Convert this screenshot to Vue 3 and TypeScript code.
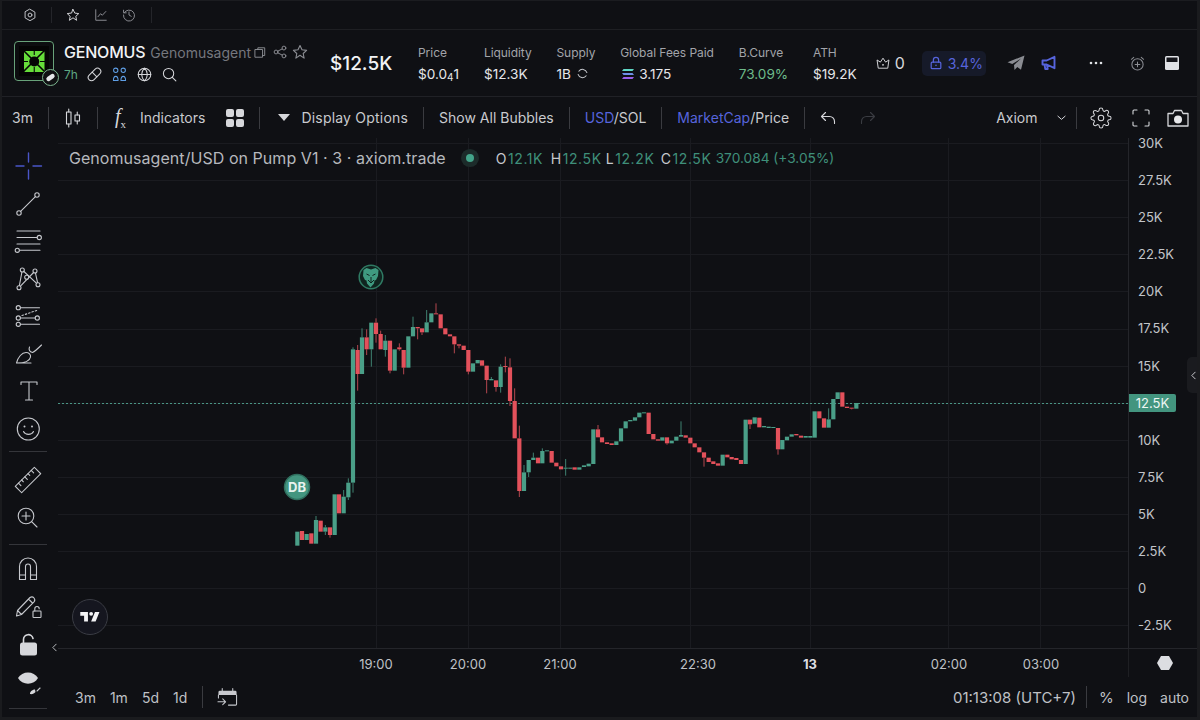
<template>
  <div class="app">
    <div class="top-strip">
      <svg class="ic14 gear-s" viewBox="0 0 16 16"><path class="ln" d="M8 1.5l5.6 3.2v6.6L8 14.5l-5.6-3.2V4.7z" /><circle class="ln" cx="8" cy="8" r="2.2" /></svg>
      <span class="strip-sep"></span>
      <svg class="ic14 star-s" viewBox="0 0 16 16"><path class="ln bright" d="M8 1.6l2 4.2 4.6.6-3.4 3.1.9 4.6L8 11.2l-4.1 2.9.9-4.6L1.4 6.4 6 5.8z" /></svg>
      <svg class="ic14 chart-s" viewBox="0 0 16 16"><path class="ln dim" d="M2 2v12h12M4.5 10l3-3.5 2 1.8L13.5 4" /></svg>
      <svg class="ic14 hist-s" viewBox="0 0 16 16"><path class="ln dim" d="M2.5 5.5A6.3 6.3 0 1 1 1.7 8M1.8 2.5v3h3M8 4.5V8l2.5 1.5" /></svg>
      <span class="strip-sep last"></span>
    </div>

    <header class="token-bar">
      <div class="logo">
        <svg viewBox="0 0 30 30" width="30" height="30">
          <rect width="30" height="30" fill="#050505" />
          <rect x="5" y="5" width="20.500" height="21" rx="1" fill="#66dd3a" />
          <path d="M4 4L26 26M26 4L4 26" stroke="#050505" stroke-width="1.600" />
          <path d="M15.250 4V9M15.250 21V27M4 15.500H9M21 15.500H27" stroke="#050505" stroke-width="1.100" />
          <circle cx="15.250" cy="15.500" r="5" fill="#050505" />
        </svg>
        <span class="pill-badge">
          <svg viewBox="0 0 12 12" width="11" height="11"><rect x="1" y="3.600" width="10" height="4.800" rx="2.400" fill="#e6e8ea" transform="rotate(-35 6 6)" /></svg>
        </span>
      </div>
      <div class="token-id">
        <div class="token-name">
          <b>GENOMUS</b><span class="full-name">Genomusagent</span>
          <svg class="copy" viewBox="0 0 14 14" width="12" height="13"><path class="ln dim" d="M4.500 3.500V1.500h8v9h-2.500M1.500 3.500h8.500v9h-8.500z" /></svg>
          <svg class="ic14 share" viewBox="0 0 16 16"><circle class="ln dim" cx="3.500" cy="8" r="2.200" /><circle class="ln dim" cx="12.500" cy="3.500" r="2.200" /><circle class="ln dim" cx="12.500" cy="12.500" r="2.200" /><path class="ln dim" d="M5.500 7l5-2.500M5.500 9l5 2.500" /></svg>
          <svg class="ic16 tstar" viewBox="0 0 16 16"><path class="ln dim" d="M8 1.600l2 4.200 4.600.6-3.400 3.100.9 4.600L8 11.200l-4.100 2.900.9-4.600L1.400 6.400 6 5.800z" /></svg>
        </div>
        <div class="token-links">
          <span class="age">7h</span>
          <svg class="ic15 l-pill" viewBox="0 0 16 16"><g transform="rotate(-45 8 8)"><rect class="ln bright" x="0" y="4.500" width="16" height="7" rx="3.500" /><path class="ln bright" d="M8 4.500v7" /></g></svg>
          <svg class="ic15 l-group" viewBox="0 0 16 16"><g class="ln blue-l"><circle cx="4" cy="3.500" r="2.300" /><circle cx="12" cy="3.500" r="2.300" /><path d="M1.500 14.500c0-6 5-6 5 0zM9.500 14.500c0-6 5-6 5 0z" /></g></svg>
          <svg class="ic15 l-globe" viewBox="0 0 16 16"><circle class="ln bright" cx="8" cy="8" r="6.700" /><path class="ln bright" d="M1.300 8h13.400M8 1.300c-4 4-4 9.400 0 13.400M8 1.300c4 4 4 9.400 0 13.400" /></svg>
          <svg class="ic15 l-search" viewBox="0 0 16 16"><circle class="ln bright" cx="7" cy="7" r="5.500" /><path class="ln bright" d="M11 11l3.800 3.800" /></svg>
        </div>
      </div>
      <div class="mcap">$12.5K</div>
      <div class="stats">
        <div class="stat" v-for="s in stats" :key="s.label">
          <span class="stat-label">{{ s.label }}</span>
          <span class="stat-value" :class="{ up: s.up }">
            <svg v-if="s.sol" class="sol" viewBox="0 0 12 10" width="12" height="10"><path d="M1.500 0H12l-1.500 2H0z" fill="#5fd6c4" /><path d="M0 4h10.500L12 6H1.500z" fill="#6e8fe6" /><path d="M1.500 8H12l-1.500 2H0z" fill="#9a5fe8" /></svg>
            <template v-if="s.sub">$0.0<span class="sub">4</span>1</template>
            <template v-else>{{ s.value }}</template>
            <svg v-if="s.ring" class="ring" viewBox="0 0 12 12" width="11" height="11"><path class="ln" d="M2 3.500A5 5 0 0 1 10.800 5M10 8.500A5 5 0 0 1 1.200 7" /></svg>
          </span>
        </div>
      </div>
      <div class="holders">
        <svg class="ic14" viewBox="0 0 16 16"><path class="ln bright" d="M2.500 13.500L1.200 4.500 5 7l3-4.500L11 7l3.800-2.500-1.300 9z" /><circle cx="8" cy="10" r="1" fill="#e0e2e6" /></svg>
        <span>0</span>
      </div>
      <div class="lock-pill">
        <svg class="ic14" viewBox="0 0 16 16"><rect class="ln blue-p" x="2.500" y="7" width="11" height="7.500" rx="1.200" /><path class="ln blue-p" d="M5 7V4.500a3 3 0 0 1 6 0V7" /><circle cx="8" cy="10.700" r=".9" fill="#5664dc" /></svg>
        <span>3.4%</span>
      </div>
      <svg class="tg" viewBox="0 0 18 16" width="18" height="16"><path d="M17.500.5L.5 7.300l4.800 1.800L14 3.500 7 10l.5 5 2.800-3 3.700 2.700z" fill="#8a8c92" /></svg>
      <svg class="mega" viewBox="0 0 16 16" width="16" height="16"><path d="M1.500 5.500h4.200L13.500 1.800v11.400L5.700 9.500H1.500zM3.500 9.500l.8 4.500h2.400l-.8-4.200" fill="none" stroke="#5664dc" stroke-width="1.900" stroke-linejoin="round" /></svg>
      <svg class="dots" viewBox="0 0 14 4" width="14" height="4"><circle cx="2" cy="2" r="1.300" fill="#e0e2e6" /><circle cx="7" cy="2" r="1.300" fill="#e0e2e6" /><circle cx="12" cy="2" r="1.300" fill="#e0e2e6" /></svg>
      <svg class="alarm" viewBox="0 0 16 16" width="15" height="15"><circle class="ln dim" cx="8" cy="9" r="6" /><path class="ln dim" d="M8 6.500v5M5.500 9h5M1.500 3.500L4 1.500M14.500 3.500L12 1.500" /></svg>
      <svg class="layout" viewBox="0 0 14 14" width="14" height="14"><rect width="14" height="14" rx="1.500" fill="#e0e2e6" /><rect x="1.500" y="1.500" width="11" height="4.500" fill="#14151a" /></svg>
    </header>

    <nav class="toolbar">
      <span class="tb-item w-interval">3m</span>
      <i class="tb-sep"></i>
      <svg class="candle-ic" viewBox="0 0 16 20" width="16" height="20"><g class="ln bright"><rect x="1.500" y="4" width="4.500" height="12" /><path d="M3.750 1v3M3.750 16v3" /><rect x="10" y="7" width="4.500" height="6" /><path d="M12.250 4v3M12.250 13v3" /></g></svg>
      <i class="tb-sep s2"></i>
      <span class="fx">f<sub>x</sub></span>
      <span class="tb-item indicators">Indicators</span>
      <svg class="grid-ic" viewBox="0 0 18 18" width="18" height="18"><rect width="8" height="8" rx="2" fill="#d6d7db" /><rect x="10" width="8" height="8" rx="2" fill="#d6d7db" /><rect y="10" width="8" height="8" rx="2" fill="#d6d7db" /><rect x="10" y="10" width="8" height="8" rx="2" fill="#d6d7db" /></svg>
      <i class="tb-sep s3"></i>
      <svg class="tri" viewBox="0 0 12 7" width="12" height="7"><path d="M0 0h12L6 7z" fill="#d6d7db" /></svg>
      <span class="tb-item disp">Display Options</span>
      <i class="tb-sep s4"></i>
      <span class="tb-item bubbles">Show All Bubbles</span>
      <i class="tb-sep s4"></i>
      <span class="tb-item"><em>USD</em>/SOL</span>
      <i class="tb-sep s4"></i>
      <span class="tb-item"><em>MarketCap</em>/Price</span>
      <i class="tb-sep s4"></i>
      <svg class="undo" viewBox="0 0 16 14" width="16" height="14"><path class="ln bright" d="M5.500 1.500L1.500 5.500l4 4M1.500 5.500h8a5 5 0 0 1 5 5v2" /></svg>
      <svg class="redo" viewBox="0 0 16 14" width="16" height="14"><path class="ln faint" d="M10.500 1.500l4 4-4 4M14.500 5.500h-8a5 5 0 0 0-5 5v2" /></svg>
      <span class="tb-item axiom">Axiom</span>
      <svg class="chev" viewBox="0 0 10 6" width="9" height="6"><path class="ln bright" d="M1 1l4 3.500L9 1" /></svg>
      <i class="tb-sep s5"></i>
      <svg class="gear" viewBox="0 0 24 24" width="22" height="22"><circle class="ln bright" cx="12" cy="12" r="3" /><path class="ln bright" d="M19.400 15a1.650 1.650 0 0 0 .33 1.820l.06.06a2 2 0 0 1 0 2.830 2 2 0 0 1-2.830 0l-.06-.06a1.650 1.650 0 0 0-1.820-.33 1.650 1.650 0 0 0-1 1.510V21a2 2 0 0 1-2 2 2 2 0 0 1-2-2v-.09A1.650 1.650 0 0 0 9 19.400a1.650 1.650 0 0 0-1.820.33l-.06.06a2 2 0 0 1-2.830 0 2 2 0 0 1 0-2.830l.06-.06a1.650 1.650 0 0 0 .33-1.820 1.650 1.650 0 0 0-1.510-1H3a2 2 0 0 1-2-2 2 2 0 0 1 2-2h.09A1.650 1.650 0 0 0 4.600 9a1.650 1.650 0 0 0-.33-1.820l-.06-.06a2 2 0 0 1 0-2.830 2 2 0 0 1 2.830 0l.06.06a1.650 1.650 0 0 0 1.820.33H9a1.650 1.650 0 0 0 1-1.510V3a2 2 0 0 1 2-2 2 2 0 0 1 2 2v.09a1.650 1.650 0 0 0 1 1.510 1.650 1.650 0 0 0 1.820-.33l.06-.06a2 2 0 0 1 2.830 0 2 2 0 0 1 0 2.830l-.06.06a1.650 1.650 0 0 0-.33 1.820V9a1.650 1.650 0 0 0 1.510 1H21a2 2 0 0 1 2 2 2 2 0 0 1-2 2h-.09a1.650 1.650 0 0 0-1.510 1z" /></svg>
      <svg class="full" viewBox="0 0 18 18" width="18" height="18"><path class="ln bright" d="M1 5V2a1 1 0 0 1 1-1h3M13 1h3a1 1 0 0 1 1 1v3M17 13v3a1 1 0 0 1-1 1h-3M5 17H2a1 1 0 0 1-1-1v-3" /></svg>
      <svg class="cam" viewBox="0 0 22 18" width="22" height="18"><path d="M1 4.500h5l1.500-3h7l1.500 3h5v12.500H1z" fill="none" stroke="#d6d7db" stroke-width="1.300" stroke-linejoin="round" /><circle cx="11" cy="10.500" r="4" fill="#e6e7ea" /></svg>
    </nav>

    <div class="workspace">
      <aside class="tools">
        <svg class="tool" viewBox="0 0 30 30"><path class="ln blue-c" d="M15.500 2v9M15.500 19v9M3 15h8M20 15h8.500" /></svg>
        <svg class="tool" viewBox="0 0 30 30"><circle class="ln" cx="6" cy="24" r="2.200" /><circle class="ln" cx="24" cy="6" r="2.200" /><path class="ln" d="M7.600 22.400L22.400 7.600" /></svg>
        <svg class="tool" viewBox="0 0 30 30"><path class="ln" d="M4 5h23M4 11.500h20M4 18h23M7 24.300h20" /><circle class="ln" cx="26.300" cy="11.500" r="2.100" /><circle class="ln" cx="4.300" cy="24.300" r="2.100" /></svg>
        <svg class="tool" viewBox="0 0 30 30"><path class="ln" d="M6 23.700L9.300 6 25 20.700 22 7 6 23.700" /><g class="ln"><circle class="hole" cx="6" cy="23.700" r="2" /><circle class="hole" cx="9.300" cy="6" r="2" /><circle class="hole" cx="13.700" cy="13.300" r="2" /><circle class="hole" cx="22" cy="7" r="2" /><circle class="hole" cx="25" cy="20.700" r="2" /></g></svg>
        <svg class="tool" viewBox="0 0 30 30"><path class="ln" d="M7.500 6.700h19M7.500 17h15M7.500 23.300h19" /><circle class="ln" cx="5.300" cy="6.700" r="2.100" /><circle class="ln" cx="24.300" cy="17" r="2.100" /><circle class="ln" cx="5.300" cy="17" r="2.100" /><circle class="ln" cx="5.300" cy="23.300" r="2.100" /><path class="ln" stroke-dasharray="1.500 2" d="M9 14.500L25 9" /></svg>
        <svg class="tool" viewBox="0 0 30 30"><path class="ln" d="M3.500 24C5 18 9 13.500 13 13.500c3 0 5 2 4.500 4.500-.6 3.500-5 6-14 6zM3.500 24H18" /><path class="ln" d="M16.500 8c-1 2.500 0 5 3 5.500 2-.8 5-3.500 9-7.500" /></svg>
        <svg class="tool" viewBox="0 0 30 30"><path class="ln" d="M8 8.500V6h16v2.500M16 6v18M12.500 24h7" /></svg>
        <svg class="tool" viewBox="0 0 30 30"><circle class="ln" cx="15.300" cy="15" r="11" /><circle cx="11.500" cy="12.500" r="1" fill="#c6c8cd" /><circle cx="19" cy="12.500" r="1" fill="#c6c8cd" /><path class="ln" d="M10.500 17.500c2 3.800 8 3.800 10 0" /></svg>
        <i class="tools-sep sep-a"></i>
        <svg class="tool" viewBox="0 0 30 30"><g transform="rotate(-45 15 15)"><rect class="ln" x="1.500" y="10.500" width="27" height="9" /><path class="ln" d="M6 10.500v3.500M10.500 10.500v2.500M15 10.500v3.500M19.500 10.500v2.500M24 10.500v3.500" /></g></svg>
        <svg class="tool" viewBox="0 0 30 30"><circle class="ln" cx="13" cy="14" r="7.800" /><path class="ln" d="M13 10v8M9 14h8M18.600 19.600L24 25" /></svg>
        <i class="tools-sep sep-b"></i>
        <svg class="tool" viewBox="0 0 30 30"><path class="ln" d="M6.500 24.500v-13a8.500 8.500 0 0 1 17 0v13h-6v-13a2.500 2.500 0 0 0-5 0v13zM6.500 20h6M17.500 20h6" /></svg>
        <svg class="tool" viewBox="0 0 30 30"><path class="ln" d="M3.500 24L4.500 18.500 17 5.500c1.500-1 3-.7 4 .5 1 1.200 1 2.600 0 3.800L8.500 22.500zM4.500 18.500L8.500 22.500M15.500 7L19.500 11" /><rect class="ln" x="20" y="19" width="8" height="6.500" rx=".8" /><path class="ln" d="M21.800 19v-2.300a2.200 2.200 0 0 1 4.400 0" /></svg>
        <svg class="tool" viewBox="0 0 30 30"><rect x="7" y="12.500" width="17" height="13" rx="2.500" fill="#d6d7db" /><path class="ln thick" d="M10.500 12.500V9.500a4.800 4.800 0 0 1 9.500-1" /></svg>
        <svg class="tool" viewBox="0 0 30 30"><path d="M5 11C9 3.500 21 3.500 25 11c-4 7.500-16 7.500-20 0z" fill="#d6d7db" /><path d="M17 27c-.3-2 2-4.500 5-4.500l.5 2.500c-1 1.500-3.500 2.500-5.500 2z" fill="#d6d7db" /><path class="ln" d="M24 24l3-3" /></svg>
        <i class="tools-sep sep-c"></i>
        <svg class="collapse" viewBox="0 0 6 10" width="5" height="9"><path class="ln" d="M5 1L1 5l4 4" /></svg>
      </aside>

      <main class="chart-col">
        <div class="plot-row">
          <div class="pane">
            <svg class="plot" viewBox="58 138 1070 510" width="1070" height="510">
              <path v-for="y in gridY" :key="'h' + y" class="grid" :d="`M58 ${y}H1128`" />
              <path v-for="x in gridX" :key="'v' + x" class="grid" :d="`M${x} 138V648`" />
              <path class="last-line" d="M58 403.500H1128" />
              <g v-for="c in candles" :key="c.x" :class="c.up ? 'up' : 'dn'">
                <path v-if="c.wick" class="wick" :d="c.wick" />
                <rect :x="c.x - 2.100" :y="c.top" width="4.200" :height="c.h" />
              </g>
              <circle cx="297" cy="487" r="12.500" fill="#43957f" stroke="#2f6e5e" stroke-width="1.500" />
              <text x="297" y="491.500" class="db">DB</text>
              <circle cx="371" cy="277" r="11.800" fill="#10241f" stroke="#2f7a63" stroke-width="1.500" />
              <path d="M363.500 270l3-2 4.500 1.500 4.500-1.500 3 2-.5 6-2 4-1.500.5-.5 3-3.500 4-3.500-4-.5-3-1.500-.5-2-4z" fill="#3f9a80" />
              <path d="M366.500 274l3 1.500M375.500 274l-3 1.500M371 277v6M368 280l3 3 3-3" stroke="#10241f" stroke-width="1" fill="none" />
            </svg>
            <div class="legend">
              <span class="legend-title">Genomusagent/USD on Pump V1 · 3 · axiom.trade</span>
              <span class="legend-dot"></span>
              <span class="ohlc">
                <span v-for="o in ohlc" :key="o[0]" class="ohlc-item"><b>{{ o[0] }}</b>{{ o[1] }}</span>
                <span class="change">370.084 (+3.05%)</span>
              </span>
            </div>
            <div class="tv-badge">
              <svg viewBox="0 0 36 28" width="23" height="18"><path d="M14 6H2v6h6v9h6V6zm12 15h-7l6-15h7l-6 15zm-7-9a3 3 0 1 0 0-6 3 3 0 0 0 0 6z" fill="#f4f4f6" /></svg>
            </div>
          </div>
          <div class="price-axis">
            <span v-for="p in prices" :key="p" class="price-row">
              <b v-if="p === '12.5K'" class="last-tag">{{ p }}</b>
              <template v-else>{{ p }}</template>
            </span>
          </div>
        </div>
        <div class="time-row">
          <div class="time-axis">
            <span v-for="t in times" :key="t.label" :class="{ day: t.day }" :style="{ left: t.x + 'px' }">{{ t.label }}</span>
          </div>
          <div class="axis-corner">
            <svg viewBox="0 0 16 14" width="16" height="14"><path d="M4 0h8l4 7-4 7H4L0 7z" fill="#dcdde1" /></svg>
          </div>
        </div>
        <div class="range-bar">
          <span class="range">3m</span><span class="range">1m</span><span class="range">5d</span><span class="range">1d</span>
          <i class="tb-sep range-sep"></i>
          <svg class="goto" viewBox="0 0 22 20" width="21" height="20"><path d="M1.500 5a1.500 1.500 0 0 1 1.500-1.500h16A1.500 1.500 0 0 1 20.500 5v3h-19z" fill="#c8c9ce" /><path class="ln" d="M5.500 1v3M16.500 1v3M20.500 8v9.500a1 1 0 0 1-1 1H12M1.500 8v3M1 15h8M6 12l3 3-3 3" /></svg>
          <span class="clock">01:13:08 (UTC+7)</span>
          <i class="tb-sep range-sep r2"></i>
          <span class="mode pct">%</span><span class="mode">log</span><span class="mode">auto</span>
        </div>
      </main>
    </div>
    <div class="side-tab">
      <svg viewBox="0 0 6 10" width="5" height="9"><path class="ln bright" d="M5 1L1 5l4 4" /></svg>
    </div>
  </div>
</template>

<script setup lang="ts">
type Raw = [number, number, number, number, number, 'g' | 'r']

const stats = [
  { label: 'Price', value: '', sub: true },
  { label: 'Liquidity', value: '$12.3K' },
  { label: 'Supply', value: '1B', ring: true },
  { label: 'Global Fees Paid', value: '3.175', sol: true },
  { label: 'B.Curve', value: '73.09%', up: true },
  { label: 'ATH', value: '$19.2K' }
]

const ohlc = [['O', '12.1K'], ['H', '12.5K'], ['L', '12.2K'], ['C', '12.5K']]
const prices = ['30K', '27.5K', '25K', '22.5K', '20K', '17.5K', '15K', '12.5K', '10K', '7.5K', '5K', '2.5K', '0', '-2.5K']
const gridY = prices.map((_, i) => Math.round(143 + i * 37.1) + 0.5)
const gridX = [376.5, 468.5, 560.5, 690.5, 810.5, 948.5, 1040.5]

// left offsets inside the time axis, which starts at x=58
const times = [
  { label: '19:00', x: 318 },
  { label: '20:00', x: 410 },
  { label: '21:00', x: 502 },
  { label: '22:30', x: 640 },
  { label: '13', x: 752, day: true },
  { label: '02:00', x: 891 },
  { label: '03:00', x: 983 }
]

// x, body top, body bottom, wick top, wick bottom - read off crops at 3x
const seg1: Raw[] = [
  [52, 815, 857, 0, 0, 'g'], [66, 813, 840, 0, 0, 'r'], [80, 822, 840, 0, 0, 'g'], [94, 820, 851, 0, 0, 'r'],
  [108, 780, 851, 768, 0, 'g'], [122, 782, 815, 0, 0, 'r'], [136, 802, 815, 795, 825, 'g'], [150, 802, 825, 0, 833, 'r'],
  [164, 703, 825, 0, 0, 'g'], [177, 703, 760, 0, 0, 'r'], [191, 710, 760, 690, 0, 'g'], [205, 668, 712, 655, 720, 'g'],
  [219, 268, 668, 262, 698, 'g'], [233, 270, 342, 255, 392, 'r'], [246, 232, 342, 205, 0, 'g'], [260, 232, 268, 208, 285, 'r'],
  [274, 188, 268, 0, 320, 'g'], [288, 188, 222, 175, 248, 'r'], [302, 222, 268, 212, 0, 'r'], [316, 242, 270, 225, 290, 'g'],
  [330, 242, 332, 0, 340, 'r'], [344, 268, 332, 0, 0, 'g'], [358, 262, 268, 250, 272, 'r']
]
const seg2: Raw[] = [
  [11, 165, 218, 0, 238, 'r'], [25, 124, 218, 0, 0, 'g'], [39, 96, 124, 65, 0, 'g'], [53, 96, 100, 0, 133, 'r'],
  [66, 100, 112, 0, 120, 'r'], [80, 82, 112, 45, 0, 'g'], [94, 55, 82, 0, 0, 'g'], [108, 55, 58, 25, 0, 'r'],
  [122, 58, 100, 0, 0, 'r'], [136, 100, 118, 0, 0, 'r'], [150, 118, 124, 0, 0, 'r'], [163, 124, 148, 0, 175, 'r'],
  [177, 148, 152, 0, 160, 'r'], [191, 152, 165, 0, 0, 'r'], [205, 165, 230, 0, 238, 'r'], [219, 205, 230, 0, 0, 'g'],
  [233, 195, 205, 0, 0, 'g'], [246, 196, 212, 0, 0, 'r'], [260, 212, 255, 0, 295, 'r'], [274, 252, 256, 246, 0, 'g'],
  [288, 256, 276, 0, 290, 'r'], [302, 215, 276, 208, 293, 'g'], [316, 213, 216, 185, 232, 'r'], [330, 217, 318, 190, 333, 'r'],
  [344, 318, 430, 280, 0, 'r'], [358, 430, 588, 392, 606, 'r'], [372, 532, 588, 510, 0, 'g'], [386, 495, 532, 0, 546, 'g'],
  [400, 488, 495, 473, 0, 'g'], [414, 488, 505, 0, 0, 'r'], [427, 468, 505, 460, 0, 'g'], [441, 466, 469, 0, 0, 'g'],
  [455, 468, 503, 0, 0, 'r'], [469, 503, 514, 0, 0, 'r'], [483, 514, 523, 0, 0, 'r'], [497, 518, 520, 492, 542, 'g'],
  [511, 518, 521, 0, 0, 'g'], [524, 517, 524, 0, 0, 'r'], [538, 517, 524, 0, 0, 'g'], [552, 511, 516, 0, 0, 'g'],
  [566, 506, 514, 0, 0, 'g']
]
const seg3: Raw[] = [
  [40, 148, 252, 0, 0, 'g'], [54, 148, 172, 135, 0, 'r'], [66, 172, 187, 0, 0, 'r'], [81, 187, 192, 0, 0, 'r'],
  [95, 190, 195, 0, 0, 'r'], [109, 184, 195, 0, 0, 'g'], [123, 145, 184, 0, 0, 'g'], [137, 124, 145, 0, 0, 'g'],
  [151, 120, 124, 0, 0, 'g'], [165, 112, 122, 0, 0, 'g'], [178, 98, 112, 0, 0, 'g'], [192, 97, 99, 0, 0, 'g'],
  [206, 98, 162, 0, 0, 'r'], [220, 162, 178, 0, 0, 'r'], [234, 178, 182, 0, 0, 'r'], [247, 172, 182, 0, 0, 'g'],
  [261, 172, 190, 0, 194, 'r'], [275, 182, 190, 0, 0, 'g'], [289, 170, 182, 0, 0, 'g'], [303, 165, 170, 124, 0, 'g'],
  [317, 166, 173, 0, 0, 'r'], [331, 173, 190, 0, 0, 'r'], [344, 190, 202, 0, 0, 'r'], [358, 202, 217, 0, 0, 'r'],
  [372, 217, 233, 0, 260, 'r'], [386, 233, 246, 0, 0, 'r'], [400, 244, 252, 0, 0, 'r'], [414, 250, 257, 0, 0, 'r'],
  [428, 224, 257, 0, 0, 'g'], [442, 224, 232, 0, 0, 'r'], [455, 231, 238, 0, 0, 'r'], [469, 234, 240, 0, 0, 'r'],
  [483, 240, 252, 0, 0, 'r'], [497, 119, 252, 0, 0, 'g'], [510, 119, 133, 0, 147, 'r'], [524, 112, 131, 0, 0, 'g'],
  [538, 113, 142, 0, 0, 'r'], [552, 138, 142, 0, 0, 'g'], [566, 140, 144, 0, 0, 'g'], [580, 141, 143, 0, 0, 'g'],
  [594, 144, 208, 0, 224, 'r'], [607, 180, 208, 0, 0, 'g'], [621, 170, 181, 0, 0, 'g'], [635, 163, 170, 0, 0, 'g'],
  [649, 162, 166, 0, 0, 'r'], [663, 167, 173, 0, 0, 'r'], [677, 168, 173, 0, 0, 'g'], [691, 168, 173, 0, 0, 'g'],
  [704, 94, 173, 0, 0, 'g'], [718, 94, 115, 0, 0, 'r'], [732, 115, 143, 0, 0, 'r'], [746, 118, 143, 85, 0, 'g'],
  [760, 57, 118, 0, 0, 'g'], [773, 37, 57, 0, 0, 'g'], [787, 37, 80, 0, 0, 'r'], [801, 80, 84, 0, 0, 'r'],
  [815, 83, 86, 0, 88, 'r'], [829, 69, 86, 0, 0, 'g']
]

function place(list: Raw[], ox: number, oy: number) {
  return list.map(([x, top, bottom, wt, wb, col]) => {
    const cx = ox + x / 3
    const t = oy + top / 3
    const b = oy + bottom / 3
    let wick = ''
    if (wt) wick += `M${cx} ${oy + wt / 3}V${t}`
    if (wb) wick += `M${cx} ${b}V${oy + wb / 3}`
    return { x: cx, top: t, h: Math.max(b - t, 1), wick, up: col === 'g' }
  })
}

const candles = [...place(seg1, 280, 260), ...place(seg2, 400, 295), ...place(seg3, 580, 380)]
</script>

<style>
html, body { margin: 0; background: #0f1014; }
</style>

<style scoped>
.app {
  position: relative;
  width: 1200px;
  height: 720px;
  display: flex;
  flex-direction: column;
  overflow: hidden;
  box-sizing: border-box;
  border-top: 1px solid #1b1c20;
  border-left: 2px solid #1a1b1e;
  border-right: 3px solid #1a1b1e;
  border-bottom: 3px solid #1a1b1e;
  background: #0f1014;
  color: #d6d7db;
  font-family: Inter, "Liberation Sans", sans-serif;
  font-size: 14px;
}
svg { display: block; flex: none; }
.ln { fill: none; stroke: #c6c8cd; stroke-width: 1.1; stroke-linecap: round; stroke-linejoin: round; }
.ln.bright { stroke: #d6d7db; }
.ln.dim { stroke: #8c8e94; }
.ln.faint { stroke: #3a3c42; }
.ln.blue-l { stroke: #5f9fe6; }
.ln.blue-p { stroke: #5664dc; stroke-width: 1.4; }
.ln.blue-c { stroke: #4a56c8; stroke-width: 1.4; }
.ln.thick { stroke: #d6d7db; stroke-width: 1.6; }
.hole { fill: #0f1014; }
.ic14 { width: 14px; height: 14px; }
.ic15 { width: 15px; height: 15px; }
.ic16 { width: 16px; height: 16px; }

.top-strip {
  height: 28px;
  flex: none;
  display: flex;
  align-items: center;
  border-bottom: 1px solid #1e1f23;
  box-sizing: content-box;
}
.gear-s { margin-left: 21px; }
.strip-sep { width: 1px; height: 16px; background: #24252a; margin-left: 14px; }
.star-s { margin-left: 14px; }
.chart-s { margin-left: 14px; }
.hist-s { margin-left: 14px; }
.strip-sep.last { margin-left: 15px; }

.token-bar {
  height: 66px;
  flex: none;
  display: flex;
  align-items: center;
  border-bottom: 1px solid #202126;
}
.logo {
  position: relative;
  width: 38px;
  height: 38px;
  margin-left: 12px;
  margin-bottom: 4px;
  border: 1px solid #68a27a;
  border-radius: 4px;
  display: flex;
  align-items: center;
  justify-content: center;
  background: #0c0d0f;
}
.pill-badge {
  position: absolute;
  right: -6px;
  bottom: -6px;
  width: 15px;
  height: 15px;
  border: 1px solid #7fb892;
  border-radius: 50%;
  background: #101113;
  display: flex;
  align-items: center;
  justify-content: center;
}
.token-id { margin-left: 10px; width: 266px; }
.token-name { display: flex; align-items: center; height: 22px; }
.token-name b { font-weight: 500; font-size: 16px; color: #f2f3f5; letter-spacing: -0.2px; }
.full-name { margin-left: 5px; font-size: 14px; color: #75777e; }
.copy { margin-left: 3px; }
.share { margin-left: 7px; }
.tstar { margin-left: 5px; }
.token-links { display: flex; align-items: center; height: 22px; }
.age { font-size: 12px; color: #5fa884; width: 23px; }
.l-pill { margin-left: 0; }
.l-group { margin-left: 10px; }
.l-globe { margin-left: 10px; }
.l-search { margin-left: 10px; }
.mcap { font-size: 19px; font-weight: 500; color: #f2f3f5; width: 88px; }
.stats { display: flex; gap: 24.8px; }
.stat { display: flex; flex-direction: column; gap: 6px; }
.stat-label { font-size: 12px; color: #a2a4aa; line-height: 15px; letter-spacing: -0.05px; }
.stat-value { font-size: 13.6px; color: #e6e7ea; line-height: 16px; display: flex; align-items: center; white-space: pre; }
.stat-value.up { color: #6dbb8a; }
.sub { font-size: 10px; position: relative; top: 3px; }
.sol { margin: 0 5px 0 2px; }
.ring { margin-left: 6px; }
.holders { display: flex; align-items: center; gap: 5px; margin-left: 19px; font-size: 16px; color: #d6d7db; }
.lock-pill {
  display: flex;
  align-items: center;
  gap: 5px;
  width: 64px;
  height: 25px;
  margin-left: 17px;
  padding-left: 7px;
  box-sizing: border-box;
  background: #161a29;
  border-radius: 5px;
  color: #5664dc;
  font-size: 14px;
}
.tg { margin-left: 21px; }
.mega { margin-left: 16px; }
.dots { margin-left: 32px; }
.alarm { margin-left: 27.5px; }
.layout { margin-left: 19.5px; }

.toolbar {
  height: 41px;
  flex: none;
  display: flex;
  align-items: center;
  white-space: nowrap;
}
.tb-item { font-size: 14px; color: #c9cace; }
.tb-item em { font-style: normal; color: #5664dc; }
.w-interval { margin-left: 10px; }
.tb-sep { width: 1px; height: 22px; background: #3a3b40; flex: none; margin-left: 15px; }
.candle-ic { margin-left: 16px; }
.s2 { margin-left: 16px; }
.fx { margin-left: 17px; font-family: "Liberation Serif", serif; font-style: italic; font-size: 20px; color: #d6d7db; width: 15px; line-height: 1; }
.fx sub { font-size: 11px; font-style: normal; }
.indicators { margin-left: 10px; }
.grid-ic { margin-left: 21px; }
.s3 { margin-left: 15px; }
.tri { margin-left: 18px; }
.disp { margin-left: 11px; letter-spacing: 0.2px; }
.s4 { margin: 0 15px; }
.undo { margin-left: 0; }
.redo { margin-left: 24px; }
.axiom { margin-left: 120px; }
.chev { margin-left: 19px; }
.s5 { margin-left: 10px; }
.gear { margin-left: 13px; }
.full { margin-left: 20px; }
.cam { margin-left: 17px; }

.workspace { flex: 1; display: flex; min-height: 0; }
.tools {
  position: relative;
  width: 56px;
  flex: none;
  display: flex;
  flex-direction: column;
  align-items: center;
  padding: 13px 4px 0 0;
  box-sizing: border-box;
}
.tool { width: 30px; height: 30px; margin-bottom: 7.5px; }
.tools-sep { width: 38px; height: 1px; background: #34353a; flex: none; }
.sep-a { margin: 0 0 12.5px; }
.sep-b { margin: 4px 0 10px; }
.sep-c { margin: 3px 0 0; }
.collapse { position: absolute; left: 50px; top: 505px; }

.chart-col { flex: 1; display: flex; flex-direction: column; min-width: 0; }
.plot-row { height: 510px; flex: none; display: flex; border-bottom: 1px solid #24252a; box-sizing: content-box; }
.pane { position: relative; width: 1070px; flex: none; border-right: 1px solid #24252a; box-sizing: content-box; }
.plot { position: absolute; left: 0; top: 0; }
.grid { stroke: #1a1b20; stroke-width: 1; fill: none; }
.last-line { stroke: #4a9585; stroke-width: 1; stroke-dasharray: 2 2; fill: none; }
.up rect { fill: #4a9f88; }
.dn rect { fill: #e3515b; }
.up .wick { stroke: #3f8271; stroke-width: 1; fill: none; }
.dn .wick { stroke: #b4474f; stroke-width: 1; fill: none; }
.db { font-size: 13px; font-weight: 700; fill: #e8f3ef; text-anchor: middle; }
.legend { position: absolute; left: 11px; top: 10px; display: flex; align-items: center; white-space: nowrap; height: 20px; }
.legend-title { font-size: 16px; color: #b6b8bd; letter-spacing: 0.05px; }
.legend-dot { width: 8px; height: 8px; margin-left: 20px; background: #43a48a; border-radius: 50%; box-shadow: 0 0 0 5px #1c2b2a; }
.ohlc { display: flex; margin-left: 22px; font-size: 14px; color: #3f8f7a; }
.ohlc-item { width: 55px; flex: none; letter-spacing: 0.6px; }
.ohlc b { font-weight: 400; color: #c6c8cd; margin-right: 1px; }
.change { font-size: 13.7px; }
.tv-badge {
  position: absolute;
  left: 14px;
  top: 461px;
  width: 34px;
  height: 34px;
  border: 1px solid #3a3c44;
  border-radius: 50%;
  background: #15161f;
  display: flex;
  align-items: center;
  justify-content: center;
}
.price-axis {
  flex: 1;
  overflow: hidden;
  display: flex;
  flex-direction: column;
  align-items: flex-start;
  padding-left: 9px;
  font-size: 13px;
  color: #c2c4c9;
}
.price-row { height: 37.1px; line-height: 37.1px; flex: none; position: relative; top: -13px; }
.last-tag {
  display: block;
  margin: 9.5px 0 0 -9px;
  width: 47px;
  height: 18px;
  line-height: 18px;
  text-align: center;
  background: #43957f;
  color: #eef6f3;
  font-weight: 400;
  font-size: 13px;
  border-radius: 0 2px 2px 0;
}
.time-row { height: 37px; flex: none; display: flex; }
.time-axis { position: relative; width: 1070px; flex: none; border-right: 1px solid #1e1f23; height: 28px; box-sizing: content-box; font-size: 13px; color: #bfc1c6; }
.time-axis span { position: absolute; top: 6px; line-height: 18px; width: 0; white-space: nowrap; display: flex; justify-content: center; }
.time-axis .day { font-weight: 700; color: #dcdde1; }
.axis-corner { flex: 1; display: flex; justify-content: center; align-items: flex-start; padding: 7px 0 0 4px; }
.range-bar { flex: 1; display: flex; align-items: center; font-size: 14px; color: #bfc1c6; padding: 0 8px 9px 17px; }
.range { margin-right: 14px; }
.range-sep { margin-left: 1px; height: 22px; }
.goto { margin-left: 14px; }
.clock { margin-left: auto; font-size: 15px; }
.r2 { margin: 0 12px 0 10px; }
.mode { margin-left: 13px; }
.pct { margin-left: 0; font-size: 15px; }
.side-tab {
  position: absolute;
  right: -3px;
  top: 356px;
  width: 13px;
  height: 36px;
  box-sizing: border-box;
  border-radius: 5px 0 0 5px;
  background: #1a1b1f;
  display: flex;
  align-items: center;
  justify-content: center;
}
</style>
